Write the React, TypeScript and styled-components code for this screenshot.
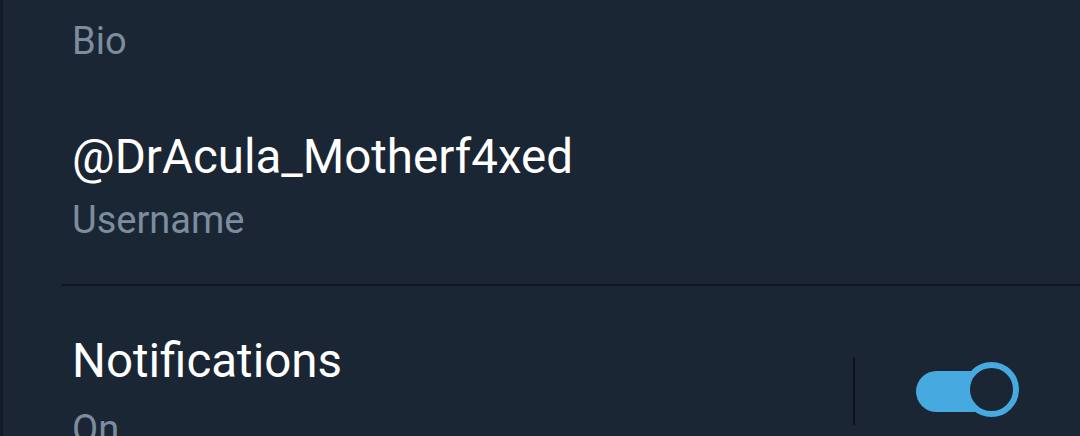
import React from "react";
import styled, { createGlobalStyle } from "styled-components";

const Global = createGlobalStyle`
  html, body { margin: 0; padding: 0; background: #1a2633; }
  body { font-family: Roboto, "Noto Sans", sans-serif; }
`;

const Page = styled.div`
  width: 1080px;
  height: 436px;
  overflow: hidden;
  background: #1a2633;
  border-left: 3px solid #121b25;
  box-sizing: border-box;
  display: flex;
  flex-direction: column;
`;

const Item = styled.div<{ $pt: number; $pb: number }>`
  padding: ${(p) => p.$pt}px 0 ${(p) => p.$pb}px 69px;
  display: flex;
  flex-direction: column;
`;

const Value = styled.div`
  color: #ffffff;
  font-size: 47.5px;
  line-height: 48px;
  white-space: nowrap;
`;

const Label = styled.div<{ $mt?: number }>`
  color: #7b8d9e;
  font-size: 38px;
  line-height: 44px;
  white-space: nowrap;
  margin-top: ${(p) => p.$mt ?? 0}px;
`;

const Divider = styled.div`
  height: 2px;
  flex: none;
  background: #0f1821;
  margin-left: 59px;
`;

const Row = styled.div`
  display: flex;
  align-items: flex-start;
  padding-left: 69px;
  padding-top: 51px;
`;

const RowText = styled.div`
  flex: 1;
  display: flex;
  flex-direction: column;
`;

const SwitchArea = styled.div`
  display: flex;
  align-items: center;
  gap: 61px;
  padding-top: 20px;
  width: 227px;
`;

const VLine = styled.div`
  width: 2px;
  height: 68px;
  background: #0c131b;
`;

const Track = styled.div`
  position: relative;
  width: 84px;
  height: 41px;
  border-radius: 21px;
  background: #46a9df;
`;

const Knob = styled.div`
  position: absolute;
  right: -19px;
  top: -9px;
  width: 43px;
  height: 43px;
  border-radius: 50%;
  border: 6px solid #46a9df;
  background: #1a2633;
`;

export default function App() {
  return (
    <>
      <Global />
      <Page>
        <Item $pt={19} $pb={0}>
          <Label>Bio</Label>
        </Item>
        <Item $pt={70} $pb={42}>
          <Value>@DrAcula_Motherf4xed</Value>
          <Label $mt={17}>Username</Label>
        </Item>
        <Divider />
        <Row>
          <RowText>
            <Value>Notifications</Value>
            <Label $mt={22}>On</Label>
          </RowText>
          <SwitchArea>
            <VLine />
            <Track>
              <Knob />
            </Track>
          </SwitchArea>
        </Row>
      </Page>
    </>
  );
}
